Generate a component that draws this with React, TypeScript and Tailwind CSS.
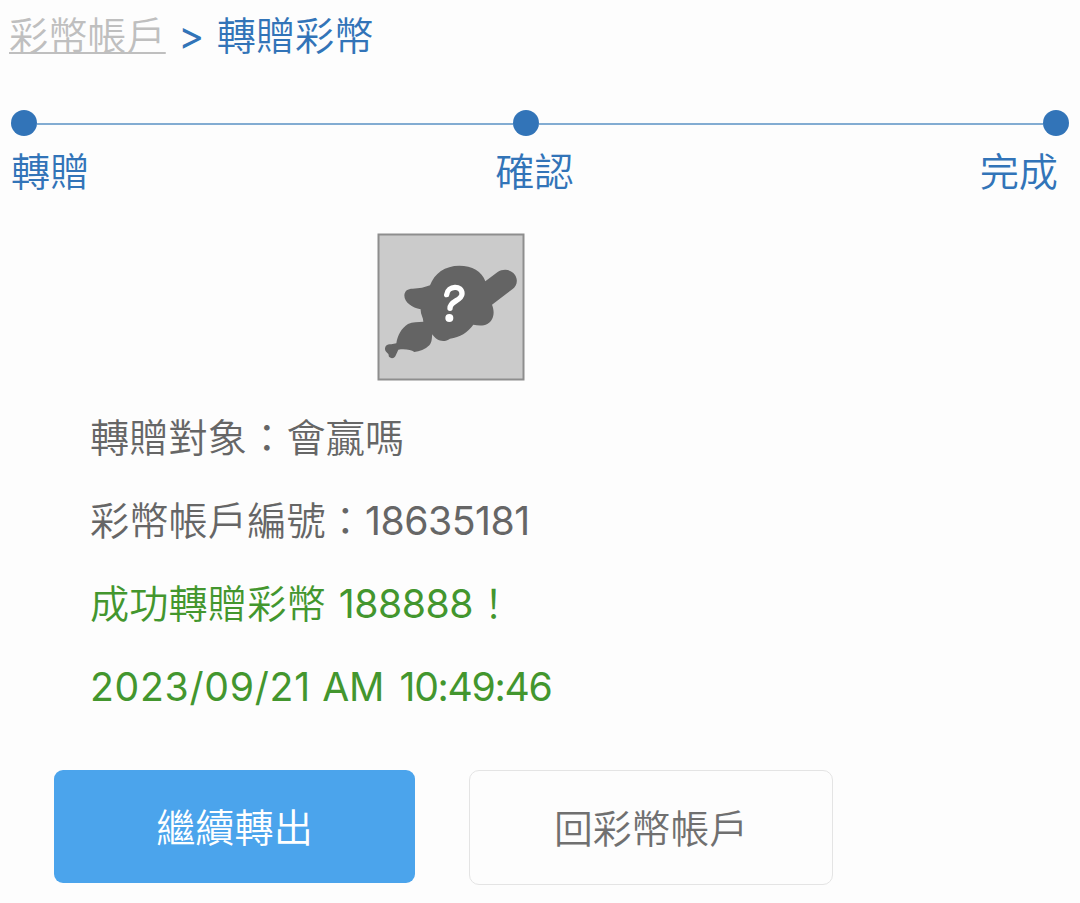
import clsx from "clsx";

const steps = ["轉贈", "確認", "完成"];

const details = [
	{ parts: [{ text: "轉贈對象：會贏嗎", className: "tracking-[0.1px]" }], success: false },
	{
		parts: [
			{ text: "彩幣帳戶編號：", className: "tracking-[0.1px]" },
			{ text: "18635181", className: "font-normal tracking-[-0.5px]" },
		],
		success: false,
	},
	{
		parts: [
			{ text: "成功轉贈彩幣 ", className: "tracking-[0.1px]" },
			{ text: "188888", className: "ml-[2px] font-normal tracking-[-0.5px]" },
			{ text: "！", className: "ml-[1px]" },
		],
		success: true,
	},
	{
		parts: [
			{ text: "2023/09/21", className: "font-normal tracking-[0.7px]" },
			{ text: " AM", className: "ml-[1px] font-normal tracking-[-0.5px]" },
			{ text: " 10:49:46", className: "ml-[6px] font-normal tracking-[-1.3px]" },
		],
		success: true,
	},
];

function Dot() {
	return <span className="h-[26px] w-[26px] shrink-0 rounded-full bg-[#3274b8]" />;
}

function StepBar() {
	return (
		<div className="mt-[54px]">
			<div className="flex items-center pl-[11px] pr-[11px]">
				<Dot />
				<span className="mt-px h-[2px] w-[476px] bg-[#82acd2]" />
				<Dot />
				<span className="mt-px h-[2px] grow bg-[#82acd2]" />
				<Dot />
			</div>
			<div className="mt-[16px] flex justify-between pl-[11px] pr-[22px] leading-[40px] text-[#3274b8]">
				{steps.map((step) => (
					<span key={step}>{step}</span>
				))}
			</div>
		</div>
	);
}

function Avatar() {
	return (
		<svg
			viewBox="21 24 444 444"
			className="ml-[377px] mt-[41px] h-[148px] w-[148px]"
			role="img"
			aria-label="avatar"
		>
			<rect x="25.5" y="28.5" width="435" height="435" fill="#cbcbcb" stroke="#8e8e8e" strokeWidth="6" />
			<path
				d="M180 181 C193 145 225 122 268 122 C306 122 336 139 346 169 L382 142 C402 129 424 134 435 150 C446 168 439 184 427 193 L366 239 C376 264 370 286 352 297 C340 303 324 302 310 299 C293 322 270 337 240 341 C222 354 199 348 187 328 C185 338 187 351 178 361 C166 373 148 380 133 381 C123 375 107 371 85 374 L76 394 C71 402 60 401 56 393 C58 384 44 382 45 370 C46 359 56 356 64 358 L79 355 C83 330 94 310 114 297 C128 290 144 291 160 290 C160 277 151 268 152 253 C126 248 103 233 103 211 C104 197 113 191 128 191 C148 191 165 187 180 181 Z"
				fill="#646464"
			/>
			<path
				d="M230 209 C233 181 277 179 276 207 C275 228 240 226 240 250"
				fill="none"
				stroke="#fff"
				strokeWidth="16"
				strokeLinecap="round"
			/>
			<circle cx="238" cy="279" r="12" fill="#fff" />
		</svg>
	);
}

export default function App() {
	return (
		<div className="h-[903px] w-[1080px] overflow-hidden bg-[#fdfdfd] pt-4 font-['Inter','Noto_Sans_CJK_TC',sans-serif] text-[39.2px] font-[350]">
			<nav className="flex h-10 pl-[9px] leading-[40px] text-[#3274b8]">
				<a
					href="#"
					className="text-[#bfbfbf] underline decoration-2 underline-offset-[2px] [text-decoration-skip-ink:none]"
				>
					彩幣帳戶
				</a>
				<span className="w-[51px] text-center font-normal">&gt;</span>
				<span>轉贈彩幣</span>
			</nav>
			<StepBar />
			<Avatar />
			<div className="mt-[15px] pl-[90px]">
				{details.map((item, index) => (
					<p
						key={index}
						className={clsx(
							"h-[83px] whitespace-pre leading-[83px]",
							item.success ? "text-[#43962e]" : "text-[#666666]"
						)}
					>
						{item.parts.map((part) => (
							<span key={part.text} className={part.className}>
								{part.text}
							</span>
						))}
					</p>
				))}
			</div>
			<div className="mt-[42px] flex pl-[54px]">
				<button className="h-[113px] w-[361px] rounded-[9px] bg-[#4ba4ec] pt-[3px] text-white">
					繼續轉出
				</button>
				<button className="ml-[54px] h-[115px] w-[364px] rounded-[10px] border-[1.5px] border-[#e4e4e4] pt-[3px] text-[38.8px] text-[#707070]">
					回彩幣帳戶
				</button>
			</div>
		</div>
	);
}
